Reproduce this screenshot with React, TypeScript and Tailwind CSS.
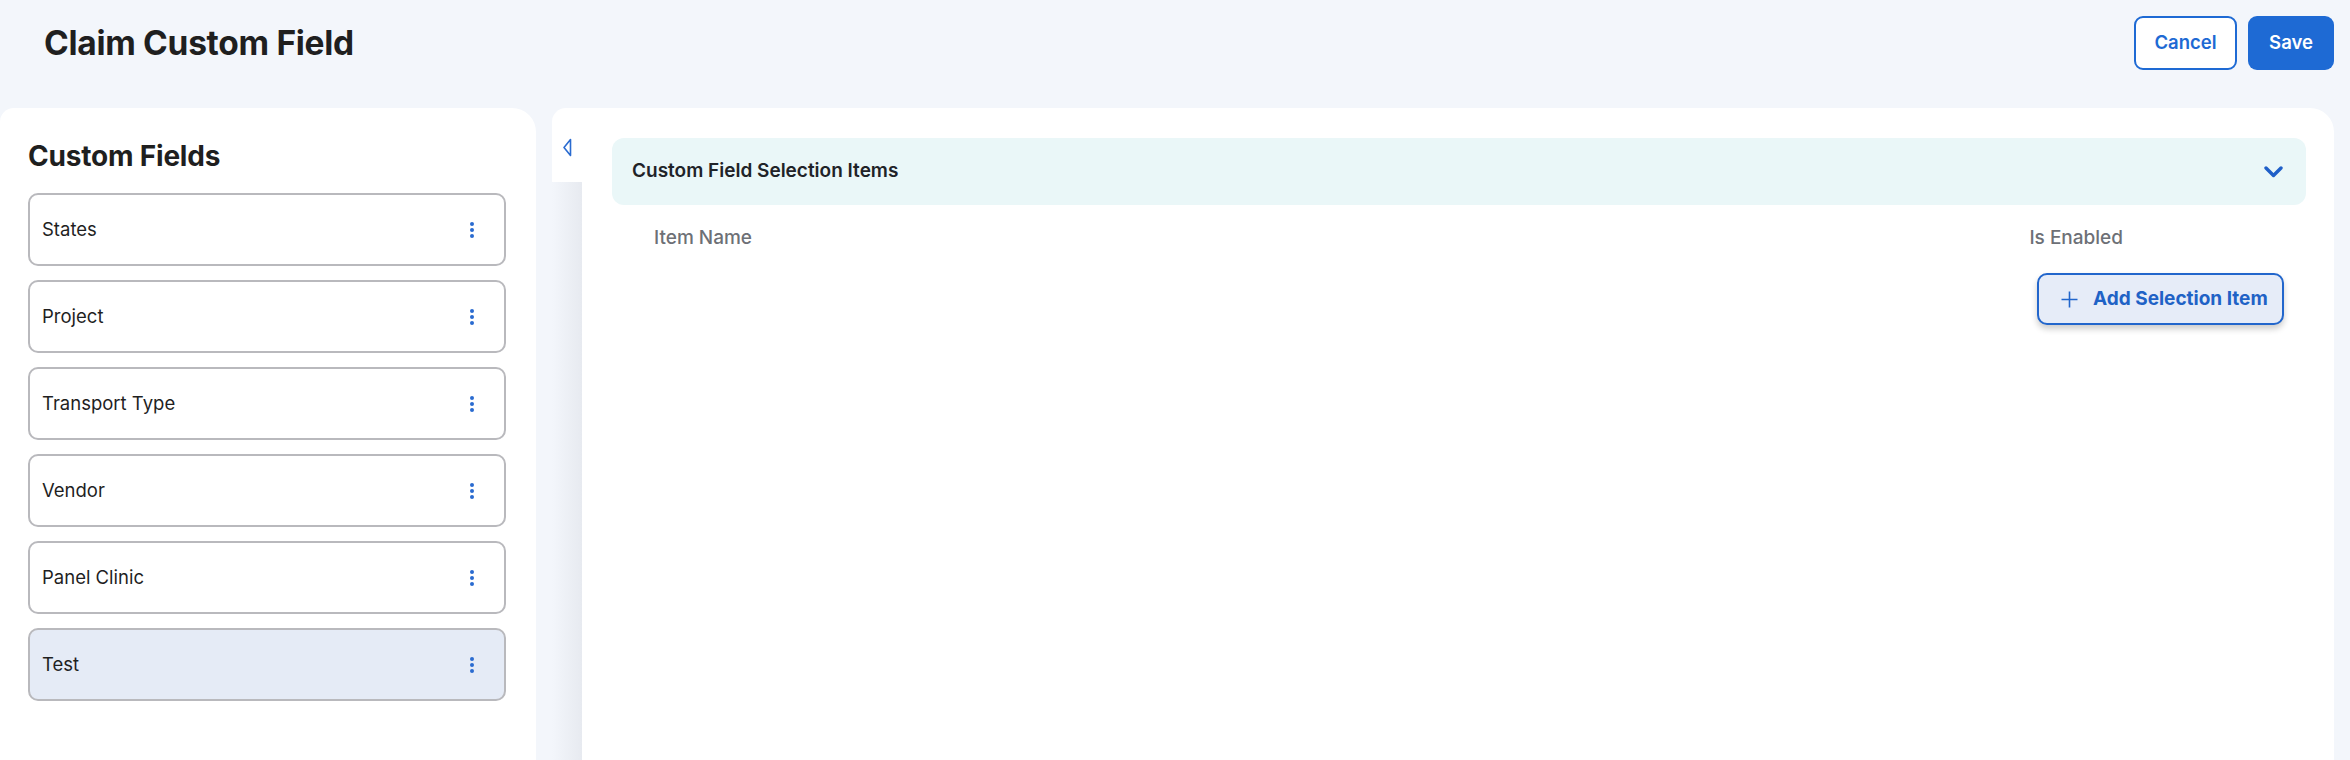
import React from 'react';

const fields = ['States', 'Project', 'Transport Type', 'Vendor', 'Panel Clinic', 'Test'];

function Kebab() {
  return (
    <div className="flex flex-col gap-[2px]">
      <span className="block w-[4px] h-[4px] rounded-full bg-[#2a6bd0]" />
      <span className="block w-[4px] h-[4px] rounded-full bg-[#2a6bd0]" />
      <span className="block w-[4px] h-[4px] rounded-full bg-[#2a6bd0]" />
    </div>
  );
}

function FieldItem({ label, active }: { label: string; active?: boolean }) {
  return (
    <div
      className={
        'flex items-center justify-between h-[73px] border-2 border-[#b9b9bd] rounded-[10px] pl-[12px] pr-[30px] ' +
        (active ? 'bg-[#e5ebf6]' : 'bg-white')
      }
    >
      <span className="text-[18.5px] text-[#1f1f1f]">{label}</span>
      <Kebab />
    </div>
  );
}

export default function App() {
  return (
    <div
      className="w-[2350px] h-[760px] bg-[#f3f6fb] overflow-hidden flex flex-col"
      style={{ fontFamily: 'Inter, "Noto Sans", sans-serif' }}
    >
      {/* page header */}
      <div className="h-[108px] shrink-0 pl-[44px] pr-[16px] pt-[16px]">
        <div className="flex items-center justify-between h-[54px]">
          <h1 className="text-[33.5px] font-bold text-[#1f1f1f] tracking-[-0.3px]">Claim Custom Field</h1>
          <div className="flex gap-[11px]">
            <button className="h-[54px] w-[103px] rounded-[9px] border-2 border-[#1e6ad4] bg-white text-[#1e6ad4] text-[18.5px] font-semibold">
              Cancel
            </button>
            <button className="h-[54px] w-[86px] rounded-[9px] bg-[#1e6ad4] text-white text-[18.5px] font-semibold">
              Save
            </button>
          </div>
        </div>
      </div>

      <div className="flex flex-1 min-h-0 pr-[16px] gap-[16px]">
        {/* left list */}
        <div className="w-[536px] shrink-0 bg-white rounded-tl-[14px] rounded-tr-[24px] pl-[28px] pr-[30px] pt-[31px]">
          <h2 className="text-[28px] leading-[34px] font-bold text-[#1f1f1f] tracking-[-0.2px]">Custom Fields</h2>
          <div className="mt-[20px] flex flex-col gap-[14px]">
            {fields.map((f) => (
              <FieldItem key={f} label={f} active={f === 'Test'} />
            ))}
          </div>
        </div>

        {/* right content */}
        <div className="flex flex-1 min-w-0">
          <div className="w-[30px] shrink-0 flex flex-col">
            <div className="h-[74px] bg-white rounded-tl-[14px] pl-[10px] pt-[30px]">
              <svg width="10" height="19" viewBox="0 0 10 19" fill="none">
                <path d="M8.5 1.5 L2 9.5 L8.5 17.5 Z" stroke="#2a6bd0" strokeWidth="1.6" strokeLinejoin="round" />
              </svg>
            </div>
            <div className="flex-1 bg-gradient-to-r from-[#f3f6fb] to-[#e7eaf0]" />
          </div>

          <div className="flex-1 bg-white rounded-tr-[24px] pl-[30px] pr-[28px] pt-[30px]">
            <div className="h-[67px] bg-[#eaf7f8] rounded-[12px] flex items-center justify-between pl-[20px] pr-[23px]">
              <span className="text-[19px] font-semibold text-[#1f2328]">Custom Field Selection Items</span>
              <svg width="19" height="12" viewBox="0 0 19 12" fill="none">
                <path d="M2 2 L9.5 9.5 L17 2" stroke="#1f5fc8" strokeWidth="3.4" strokeLinecap="round" strokeLinejoin="round" />
              </svg>
            </div>

            <div className="mt-[21px] flex justify-between pl-[42px] pr-[183px] text-[19px] leading-[23px] font-medium text-[#6d7076]">
              <span>Item Name</span>
              <span>Is Enabled</span>
            </div>

            <div className="mt-[24px] flex justify-end pr-[22px]">
              <button className="h-[52px] w-[247px] flex items-center gap-[15px] pl-[22px] border-2 border-[#2266cc] bg-[#e6ecf8] rounded-[10px] shadow-[0_4px_6px_rgba(0,0,0,0.2)]">
                <svg width="17" height="17" viewBox="0 0 17 17" fill="none">
                  <path d="M8.5 0.5 V16.5 M0.5 8.5 H16.5" stroke="#2266cc" strokeWidth="1.6" />
                </svg>
                <span className="text-[19px] font-bold text-[#1f62c6]">Add Selection Item</span>
              </button>
            </div>
          </div>
        </div>
      </div>
    </div>
  );
}
